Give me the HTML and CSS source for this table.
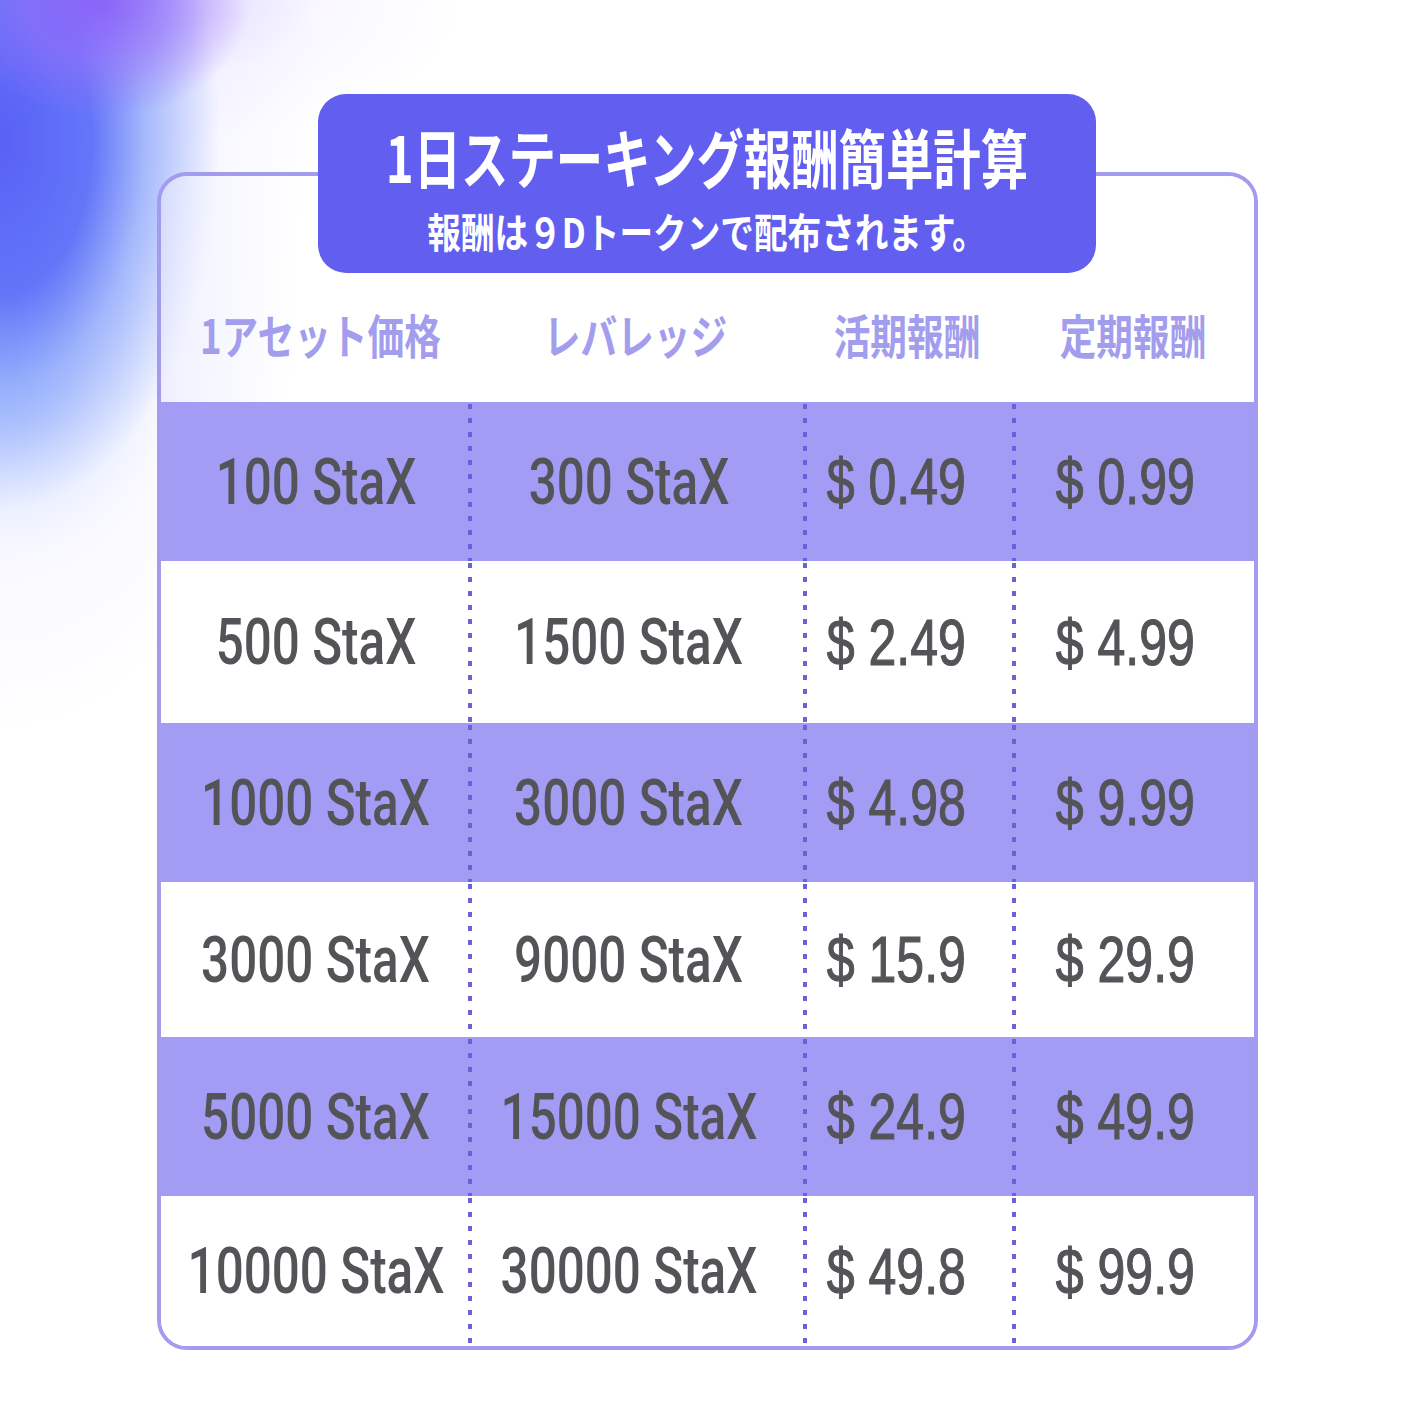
FILE: index.html
```html
<!DOCTYPE html>
<html lang="ja">
<head>
<meta charset="utf-8">
<title>1日ステーキング報酬簡単計算</title>
<link rel="stylesheet" href="styles.css">
</head>
<body>
<main class="page">
  <section class="panel">
    <header class="banner">
      <h1 class="title"><span class="sq">1日ステーキング報酬簡単計算</span></h1>
      <p class="subtitle"><span class="sq">報酬は９Dトークンで配布されます。</span></p>
    </header>
    <div class="card">
      <div class="head">
        <div class="hcell c1"><span class="sq">1アセット価格</span></div>
        <div class="hcell c2"><span class="sq">レバレッジ</span></div>
        <div class="hcell c3"><span class="sq">活期報酬</span></div>
        <div class="hcell c4"><span class="sq">定期報酬</span></div>
      </div>
      <div class="row alt">
        <div class="cell c1"><span class="num">100 StaX</span></div>
        <div class="cell c2"><span class="num">300 StaX</span></div>
        <div class="cell c3"><span class="usd">$ 0.49</span></div>
        <div class="cell c4"><span class="usd">$ 0.99</span></div>
      </div>
      <div class="row">
        <div class="cell c1"><span class="num">500 StaX</span></div>
        <div class="cell c2"><span class="num">1500 StaX</span></div>
        <div class="cell c3"><span class="usd">$ 2.49</span></div>
        <div class="cell c4"><span class="usd">$ 4.99</span></div>
      </div>
      <div class="row alt">
        <div class="cell c1"><span class="num">1000 StaX</span></div>
        <div class="cell c2"><span class="num">3000 StaX</span></div>
        <div class="cell c3"><span class="usd">$ 4.98</span></div>
        <div class="cell c4"><span class="usd">$ 9.99</span></div>
      </div>
      <div class="row">
        <div class="cell c1"><span class="num">3000 StaX</span></div>
        <div class="cell c2"><span class="num">9000 StaX</span></div>
        <div class="cell c3"><span class="usd">$ 15.9</span></div>
        <div class="cell c4"><span class="usd">$ 29.9</span></div>
      </div>
      <div class="row alt">
        <div class="cell c1"><span class="num">5000 StaX</span></div>
        <div class="cell c2"><span class="num">15000 StaX</span></div>
        <div class="cell c3"><span class="usd">$ 24.9</span></div>
        <div class="cell c4"><span class="usd">$ 49.9</span></div>
      </div>
      <div class="row">
        <div class="cell c1"><span class="num">10000 StaX</span></div>
        <div class="cell c2"><span class="num">30000 StaX</span></div>
        <div class="cell c3"><span class="usd">$ 49.8</span></div>
        <div class="cell c4"><span class="usd">$ 99.9</span></div>
      </div>
    </div>
  </section>
</main>
</body>
</html>
```

FILE: styles.css
```css
* { box-sizing: border-box; }

html, body {
  margin: 0;
  padding: 0;
}

body {
  width: 1414px;
  height: 1414px;
  overflow: hidden;
  font-family: "Noto Sans CJK JP", "Noto Sans", sans-serif;
  background-color: #ffffff;
  background-image:
    radial-gradient(ellipse 150px 120px at 100px 0px, rgba(138, 92, 248, 0.9) 0%, rgba(150, 110, 250, 0.6) 50%, rgba(200, 180, 255, 0) 100%),
    radial-gradient(ellipse 220px 370px at 0px 140px, rgba(88, 96, 245, 1) 0%, rgba(92, 112, 248, 0.95) 42%, rgba(125, 155, 250, 0.65) 66%, rgba(200, 215, 255, 0) 100%),
    radial-gradient(ellipse 170px 190px at 0px 370px, rgba(150, 185, 255, 0.6) 0%, rgba(190, 210, 255, 0.3) 55%, rgba(230, 238, 255, 0) 100%),
    radial-gradient(ellipse 320px 580px at 0px 150px, rgba(195, 198, 255, 0.55) 0%, rgba(222, 224, 255, 0.3) 55%, rgba(255, 255, 255, 0) 100%),
    radial-gradient(ellipse 320px 150px at 140px 0px, rgba(205, 188, 255, 0.65) 0%, rgba(235, 228, 255, 0.3) 55%, rgba(255, 255, 255, 0) 100%);
  background-repeat: no-repeat;
}

.page {
  display: flex;
  justify-content: center;
  padding-top: 94px;
}

.panel {
  width: 1101px;
  display: flex;
  flex-direction: column;
  align-items: center;
}

.sq {
  display: inline-block;
  transform: scaleX(0.8);
  white-space: nowrap;
}

/* Banner */
.banner {
  position: relative;
  z-index: 2;
  width: 778px;
  height: 179px;
  background: #615ef0;
  border-radius: 28px;
  color: #ffffff;
  display: flex;
  flex-direction: column;
  align-items: center;
  padding-top: 26px;
}

.title {
  margin: 0;
  font-size: 64px;
  font-weight: 700;
  line-height: 70px;
}

.title .sq {
  transform: scaleX(0.74);
}

.subtitle {
  margin: 12px 0 0;
  font-size: 41px;
  font-weight: 700;
  line-height: 56px;
}

.subtitle .sq {
  transform: scaleX(0.82);
}

/* Card */
.card {
  width: 1101px;
  margin-top: -101px;
  border: 4px solid #a39cee;
  border-radius: 30px;
  overflow: hidden;
  background: transparent;
}

.head,
.row {
  display: grid;
  grid-template-columns: 307px 335px 209px 242px;
}

.head {
  height: 226px;
  padding-top: 88px;
  background: linear-gradient(to right, rgba(232, 234, 255, 0.55) 0%, rgba(255, 255, 255, 0.9) 12%, #ffffff 30%);
}

.hcell {
  display: flex;
  align-items: center;
  justify-content: center;
  color: #a29ded;
  font-size: 47px;
  font-weight: 700;
}

.hcell .sq {
  transform: scaleX(0.78);
}

.row {
  height: 159px;
  background: #ffffff;
}

.row.alt {
  background: #a39cf4;
}

.row:nth-child(3) { height: 162px; }
.row:nth-child(5) { height: 155px; }
.row:nth-child(7) { height: 150px; }

.cell {
  display: flex;
  align-items: center;
  justify-content: center;
  color: #545458;
}

.cell + .cell {
  background-image: linear-gradient(to bottom, #6861da 0, #6861da 5px, transparent 5px);
  background-size: 4px 14px;
  background-repeat: repeat-y;
  background-position: 0 2px;
}

.c1 { padding-left: 4px; }
.c2 { padding-right: 12px; }
.c3 { padding-right: 22px; }
.c4 { padding-right: 14px; }

.hcell.c1 { padding-left: 12px; }
.hcell.c2, .hcell.c3, .hcell.c4 { padding-right: 0; }

.num {
  display: inline-block;
  font-family: Roboto, "Liberation Sans", sans-serif;
  font-size: 65px;
  font-weight: 500;
  transform: scaleX(0.76);
  white-space: nowrap;
}

.usd {
  display: inline-block;
  font-family: "Liberation Sans", Arial, sans-serif;
  font-size: 65px;
  font-weight: 400;
  -webkit-text-stroke: 1.2px #545458;
  transform: scaleX(0.77);
  white-space: nowrap;
}
```
